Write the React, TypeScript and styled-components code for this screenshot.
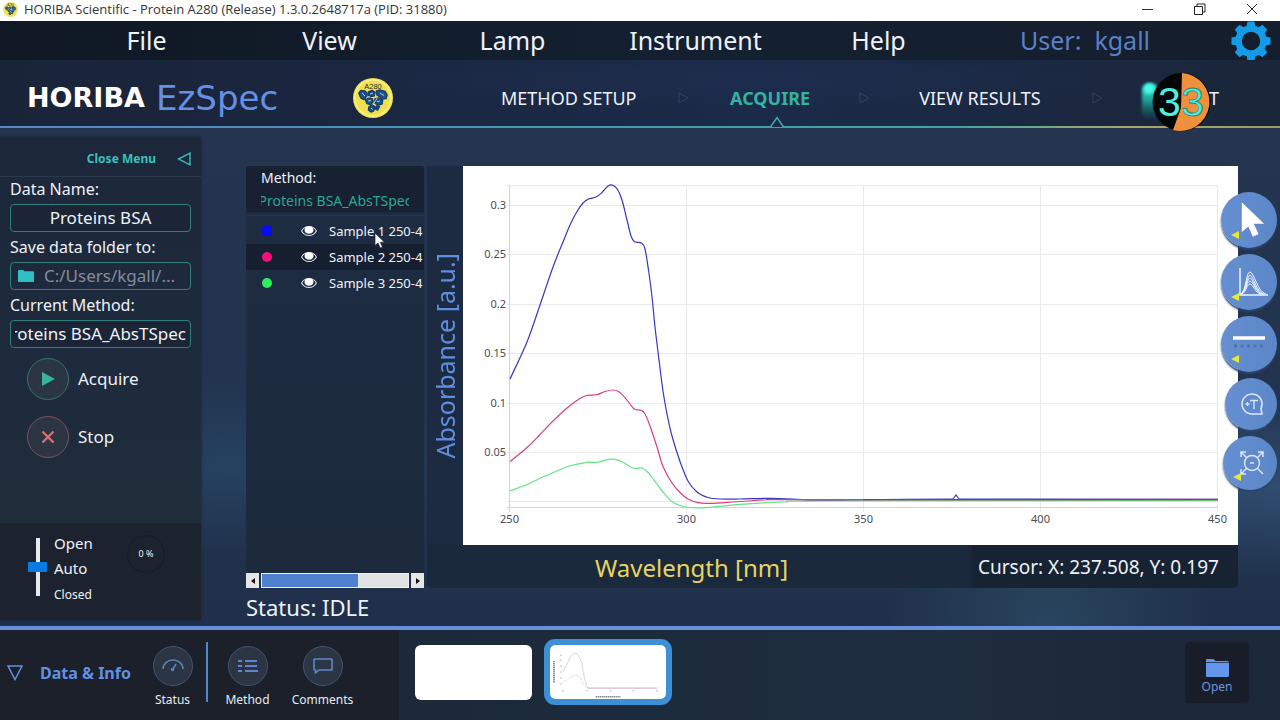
import React from "react";
import styled, { createGlobalStyle } from "styled-components";

const GlobalStyle = createGlobalStyle`
  *, *::before, *::after { box-sizing: border-box; }
  body {
    margin: 0;
    background: #1e2c42;
    color: #eef2f8;
    font-family: "Noto Sans", "Open Sans", sans-serif;
    font-size: 17px;
    line-height: 24px;
  }
  button, input {
    font: inherit;
    color: inherit;
    margin: 0;
    padding: 0;
    border: 0;
    background: none;
  }
  button { cursor: pointer; }
  ul { list-style: none; margin: 0; padding: 0; }
  svg { display: block; flex: none; }
`;

const Window = styled.div`
  min-height: 100vh;
  display: flex;
  flex-direction: column;
  overflow: hidden;
`;

/* ---------- title bar ---------- */

const TitleBar = styled.div`
  display: flex;
  align-items: center;
  height: 21px;
  padding: 0 20px 3px 3px;
  gap: 6px;
  background: #ffffff;
  color: #33353a;
`;

const Title = styled.h1`
  flex: 1;
  margin: 0;
  font-family: "Open Sans", "Noto Sans", sans-serif;
  font-size: 13px;
  font-weight: 400;
  line-height: 18px;
  white-space: nowrap;
`;

const WindowButtons = styled.div`
  display: flex;
  gap: 36px;
  button { width: 16px; height: 16px; display: grid; place-items: center; }
`;

/* ---------- menu bar ---------- */

const MenuBar = styled.div`
  display: flex;
  align-items: center;
  height: 39px;
  padding: 0 9px 0 55px;
  background: linear-gradient(90deg, #0f1823, #142031 50%, #151e2d);
`;

const Menus = styled.nav`
  flex: 1;
  display: grid;
  grid-template-columns: repeat(5, 1fr);
`;

const MenuButton = styled.button`
  font-size: 25px;
  line-height: 39px;
`;

const UserArea = styled.div`
  display: flex;
  align-items: center;
  justify-content: space-between;
  width: 301px;
  padding-left: 50px;
  font-size: 25px;
  line-height: 39px;
  color: #5b80c4;
  white-space: pre;
  button { height: 39px; }
`;

/* ---------- header with the work flow steps ---------- */

const Header = styled.header`
  position: relative;
  display: flex;
  height: 68px;
  padding: 0 61px 0 27px;
  background:
    radial-gradient(ellipse at 58% 30%, #20305199, transparent 40%),
    linear-gradient(90deg, #1a2439, #1b2a49 60%, #1a2639);
  &::after {
    content: "";
    position: absolute;
    inset: auto 0 0 0;
    height: 2px;
    background: linear-gradient(90deg, #5a86c8, #3f9cab 45%, #3fa79f 75%, #a8a968 88%, #9a9c60);
  }
`;

const Brand = styled.div`
  display: flex;
  align-items: center;
  width: 474px;
  height: 76px;
  font-family: "DejaVu Sans", sans-serif;
  line-height: 30px;
`;

const BrandMaker = styled.span`
  width: 129px;
  font-size: 27px;
  font-weight: 700;
  color: #ffffff;
`;

const BrandProduct = styled.span`
  width: 197px;
  font-size: 34px;
  color: #6590e6;
`;

const Steps = styled.nav`
  flex: 1;
  display: flex;
  height: 76px;
  align-items: center;
  font-size: 18px;
`;

const Step = styled.button<{ $active?: boolean; $covered?: boolean }>`
  position: relative;
  min-width: 64px;
  height: 24px;
  white-space: nowrap;
  text-align: ${(p) => (p.$covered ? "right" : "center")};
  font-weight: ${(p) => (p.$active ? 700 : 400)};
  color: ${(p) => (p.$active ? "#35b3a2" : "#eef2f8")};
`;

const ActiveMark = styled.svg`
  position: absolute;
  z-index: 1;
  left: 50%;
  bottom: -18px;
`;

const StepArrow = styled.span<{ $weight: number }>`
  flex: ${(p) => p.$weight};
  display: grid;
  place-items: center;
`;

const Recorder = styled.svg`
  position: absolute;
  right: 66px;
  top: 10px;
  z-index: 2;
`;

/* ---------- work area ---------- */

const Work = styled.main`
  position: relative;
  flex: 1;
  display: flex;
  align-items: stretch;
  gap: 45px;
  padding: 9px 42px 0 0;
  background:
    radial-gradient(circle at 82% 100%, #29455f, transparent 14%),
    radial-gradient(ellipse at 100% 72%, #2f4d70, transparent 18%),
    radial-gradient(ellipse at 18% 68%, #254260, transparent 18%),
    linear-gradient(180deg, #25344f, #22344f 60%, #20304b);
`;

const Sidebar = styled.aside`
  display: flex;
  flex-direction: column;
  width: 201px;
  margin-bottom: 6px;
  background: linear-gradient(180deg, #1d273a, #1e2b3d 45%, #1f2c39 80%);
  box-shadow: 0 0 3px #1a263a;
`;

const CloseMenu = styled.button`
  display: flex;
  align-items: center;
  justify-content: flex-end;
  gap: 21px;
  height: 40px;
  padding: 4px 10px 0 0;
  border-bottom: 1px solid #2c384c;
  font-size: 12px;
  font-weight: 700;
  color: #38c2bd;
`;

const Fields = styled.form`
  display: flex;
  flex-direction: column;
  padding: 0 10px;
`;

const Field = styled.div`
  display: flex;
  flex-direction: column;
  height: 58px;
  gap: 3px;
  white-space: nowrap;
`;

const FieldLabel = styled.label`
  font-size: 16px;
  line-height: 24px;
`;

const TextBox = styled.input<{ $showEnd?: boolean }>`
  width: 100%;
  height: 28px;
  padding: 0 4px 2px;
  border: 1px solid #2f7f7c;
  border-radius: 4px;
  text-align: ${(p) => (p.$showEnd ? "right" : "center")};
  direction: ${(p) => (p.$showEnd ? "rtl" : "ltr")};
  background: #1b2536;
`;

const FolderButton = styled.button`
  display: flex;
  align-items: center;
  gap: 10px;
  height: 28px;
  padding: 0 7px;
  border: 1px solid #2f7f7c;
  border-radius: 4px;
  color: #858c98;
`;

const Actions = styled.div`
  display: flex;
  flex-direction: column;
  gap: 16px;
  padding: 7px 27px;
  flex: 1;
`;

const ActionButton = styled.button`
  display: flex;
  align-items: center;
  gap: 9px;
  height: 42px;
`;

const RoundIcon = styled.span<{ $border: string; $size: number }>`
  display: grid;
  place-items: center;
  width: ${(p) => p.$size}px;
  height: ${(p) => p.$size}px;
  border: 1px solid ${(p) => p.$border};
  border-radius: 50%;
  background: #2c3544;
`;

const ShutterPanel = styled.div`
  display: flex;
  height: 97px;
  padding: 8px 0 0 28px;
  background: #1c222e;
`;

const ShutterSlider = styled.input`
  appearance: none;
  writing-mode: vertical-lr;
  direction: rtl;
  width: 19px;
  height: 58px;
  margin-top: 7px;
  &::-webkit-slider-runnable-track {
    width: 4px;
    height: 58px;
    background: #e8eaee;
  }
  &::-webkit-slider-thumb {
    appearance: none;
    width: 19px;
    height: 10px;
    margin-left: -8px;
    background: #0a7be0;
  }
`;

const ShutterLabels = styled.ul`
  width: 67px;
  margin-left: 7px;
  font-size: 15px;
  line-height: 25px;
  li:last-child { font-size: 12px; line-height: 27px; }
`;

const Progress = styled.span`
  display: grid;
  place-items: center;
  width: 38px;
  height: 38px;
  margin: 4px 0 0 6px;
  border: 1px solid #171b25;
  border-radius: 50%;
  font-size: 9px;
`;

/* ---------- samples and chart ---------- */

const Content = styled.section`
  flex: 1;
  min-width: 0;
  display: flex;
  flex-direction: column;
  padding-top: 29px;
`;

const Panels = styled.div`
  display: flex;
  gap: 3px;
  height: 422px;
`;

const Samples = styled.section`
  position: relative;
  display: flex;
  flex-direction: column;
  width: 178px;
  background: #1d2b41;
`;

const MethodHead = styled.div`
  height: 46px;
  padding: 0 15px;
  border-radius: 4px 4px 0 0;
  font-size: 14px;
  line-height: 23px;
  background: #172131;
`;

const MethodName = styled.div`
  display: flex;
  justify-content: center;
  overflow: hidden;
  white-space: nowrap;
  color: #2fa691;
`;

const SampleList = styled.ul`
  flex: 1;
  margin-top: 3px;
  padding-top: 2px;
  border-top: 1px solid #24344c;
  background: linear-gradient(180deg, #1e2c43, #1c2a3c);
`;

const SampleRow = styled.li<{ $dark?: boolean }>`
  display: flex;
  align-items: center;
  height: 26px;
  padding: 0 0 0 16px;
  white-space: nowrap;
  font-size: 13px;
  background: ${(p) => (p.$dark ? "#151f2f" : "transparent")};
`;

const Dot = styled.span<{ $color: string; $square?: boolean }>`
  flex: none;
  width: 10px;
  height: 10px;
  margin-right: 29px;
  border-radius: ${(p) => (p.$square ? "2px" : "50%")};
  background: ${(p) => p.$color};
`;

const EyeButton = styled.button`
  flex: none;
  width: 16px;
  margin-right: 12px;
`;

const Pointer = styled.svg`
  position: absolute;
  left: 128px;
  top: 66px;
`;

const ScrollBar = styled.div`
  display: flex;
  gap: 2px;
  height: 15px;
  button {
    width: 13px;
    display: grid;
    place-items: center;
    background: #e6e6e6;
  }
`;

const ScrollTrack = styled.div`
  flex: 1;
  background: #e1e2e4;
  border: 1px solid #eef0f4;
`;

const ScrollThumb = styled.div`
  width: 66%;
  height: 100%;
  background: #5080d0;
`;

const ChartPanel = styled.section`
  flex: 1;
  min-width: 0;
  display: grid;
  grid-template-columns: 36px 1fr;
  grid-template-rows: 1fr 43px;
  background: #1d2b42;
  border-radius: 0 0 5px 5px;
`;

const YTitle = styled.div`
  display: grid;
  place-items: center;
  font-size: 25px;
  line-height: 36px;
  color: #5e8ede;
  span { writing-mode: vertical-rl; transform: rotate(180deg); }
`;

const Plot = styled.div`
  min-height: 0;
  background: #ffffff;
  svg { width: 100%; height: 100%; }
  text { font-size: 11px; fill: #4c4c54; }
`;

const ChartFooter = styled.div`
  grid-column: 1 / -1;
  display: flex;
  line-height: 45px;
  background: #1b293c;
  border-radius: 0 0 5px 5px;
`;

const XTitle = styled.div`
  flex: 1;
  padding-right: 16px;
  text-align: center;
  font-size: 24px;
  color: #e6d560;
`;

const CursorReadout = styled.output`
  width: 266px;
  height: 43px;
  padding-left: 6px;
  border-radius: 0 0 5px 0;
  font-size: 19px;
  white-space: nowrap;
  background: #172333;
`;

const Status = styled.div`
  font-size: 22px;
  line-height: 38px;
`;

const Tools = styled.div`
  position: absolute;
  right: 3px;
  top: 64px;
  display: flex;
  flex-direction: column;
  align-items: flex-end;
  gap: 6px;
`;

const ToolButton = styled.button<{ $size: number; $inset?: number }>`
  position: relative;
  display: grid;
  place-items: center;
  width: ${(p) => p.$size}px;
  height: ${(p) => p.$size}px;
  padding-left: ${(p) => p.$inset ?? 0}px;
  border-radius: 50%;
  background: linear-gradient(90deg, #658fd0, #5b86c8);
  box-shadow: 0 2px 2px #2b4470;
`;

const ToolFlag = styled.svg`
  position: absolute;
  left: 10px;
  bottom: 9px;
`;

/* ---------- bottom bar ---------- */

const BottomBar = styled.footer`
  display: flex;
  height: 94px;
  border-top: 4px solid #6690dc;
  background: linear-gradient(90deg, #1b2939 30%, #1e2d3f 70%, #1c2738);
`;

const InfoPanel = styled.div`
  display: flex;
  align-items: flex-start;
  width: 399px;
  padding: 12px 0 0 7px;
  background: #1b202b;
`;

const InfoToggle = styled.button`
  display: flex;
  align-items: center;
  gap: 17px;
  width: 128px;
  height: 62px;
  font-size: 16px;
  font-weight: 700;
  white-space: nowrap;
  color: #6490e0;
`;

const InfoButton = styled.button`
  display: flex;
  flex-direction: column;
  align-items: center;
  gap: 2px;
  width: 75px;
  padding-top: 4px;
  font-size: 12px;
  color: #e6ebf3;
`;

const InfoDivider = styled.span`
  width: 2px;
  height: 60px;
  margin: 0 2px 0 -4px;
  background: #4a8bcc;
`;

const Thumbs = styled.div`
  flex: 1;
  display: flex;
  align-items: flex-start;
  gap: 12px;
  padding: 9px 0 0 16px;
`;

const Thumb = styled.button<{ $selected?: boolean }>`
  width: ${(p) => (p.$selected ? 128 : 117)}px;
  height: ${(p) => (p.$selected ? 66 : 55)}px;
  margin-top: ${(p) => (p.$selected ? 0 : 6)}px;
  border: ${(p) => (p.$selected ? "6px solid #3d8fd6" : "0")};
  border-radius: ${(p) => (p.$selected ? 11 : 6)}px;
  background-color: ${(p) => (p.$selected ? "#3d8fd6" : "#ffffff")};
  overflow: hidden;
  svg { width: 100%; height: 100%; }
`;

const ThumbInner = styled.span`
  display: block;
  height: 100%;
  border-radius: 5px;
  background: #ffffff;
`;

const OpenButton = styled.button`
  display: flex;
  flex-direction: column;
  align-items: center;
  width: 64px;
  height: 61px;
  margin: 12px 31px 0 0;
  padding-top: 17px;
  border-radius: 4px;
  font-size: 12px;
  line-height: 20px;
  color: #6f95dc;
  background: #181d29;
`;

/* ---------- chart data ---------- */

type Point = [number, number];

const blue: Point[] = [
  [47, 213], [64, 176], [77, 139], [90, 101], [100, 76], [107, 59], [114, 45.5], [120, 37], [125.5, 33],
  [133, 31], [139, 26.5], [145, 20], [150, 19.3], [154.5, 23.5], [159, 34], [164, 54], [168, 70],
  [171.5, 75.8], [178.5, 77], [182, 83], [185.5, 104], [189, 131], [192, 161], [195.5, 190], [200, 225],
  [204, 248], [209, 270], [217, 295.5], [225, 315], [234, 326], [245, 331.5], [257, 333], [277, 333],
  [310, 332.3], [345, 333.8], [420, 333.5], [488, 333],
];
const red: Point[] = [
  [47, 295.5], [64, 281.5], [77, 268.5], [90, 255], [104, 242], [114, 234.5], [122, 230], [134, 228.7],
  [142, 225.5], [150, 224], [155.5, 225.5], [162, 231.7], [169, 240.7], [172, 243.5], [178, 244.3],
  [182, 248], [187, 260], [194, 281], [200, 300.5], [209, 317], [217, 326.5], [225, 333], [235, 336.7],
  [247, 337.3], [277, 335.5], [310, 333.5], [345, 333.7], [755, 333.4],
];
const green: Point[] = [
  [47, 325], [64, 318.5], [80, 311], [94, 305], [107, 299.8], [124, 296.3], [135, 296.3], [145, 293.4],
  [152, 293.4], [160, 296.3], [169, 301.7], [174, 302.4], [179, 302], [185, 306.5], [194, 318],
  [202, 328.5], [210, 336.3], [220, 340.5], [234, 342], [250, 341], [277, 338.3], [320, 336], [370, 334.8],
  [755, 334.6],
];

/* Catmull-Rom spline through the measured points */
const smooth = (pts: Point[]) =>
  pts.slice(1).reduce((d, p, i) => {
    const p0 = pts[Math.max(i - 1, 0)];
    const p1 = pts[i];
    const p3 = pts[Math.min(i + 2, pts.length - 1)];
    const c1 = [p1[0] + (p[0] - p0[0]) / 6, p1[1] + (p[1] - p0[1]) / 6];
    const c2 = [p[0] - (p3[0] - p1[0]) / 6, p[1] - (p3[1] - p1[1]) / 6];
    return `${d}C${c1.map((n) => n.toFixed(1)).join(" ")} ${c2.map((n) => n.toFixed(1)).join(" ")} ${p.join(" ")}`;
  }, `M${pts[0].join(" ")}`);

const bluePath = smooth(blue) + "L490 333L493 329L496 333L755 333.3";
const redPath = smooth(red);
const greenPath = smooth(green);

const yTicks: [string, number][] = [["0.3", 39], ["0.25", 88], ["0.2", 138], ["0.15", 187], ["0.1", 237], ["0.05", 286]];
const xTicks: [string, number][] = [["250", 47], ["300", 224], ["350", 401], ["400", 578], ["450", 755]];

const Spectrum = () => (
  <svg viewBox="0 0 775 379" role="img" aria-label="Absorbance spectrum">
    <g fill="none" stroke="#e9e9ec">
      {[19.5, 39.5, 88.5, 138.5, 187.5, 237.5, 286.5, 335.5].map((y) => <path key={y} d={`M44 ${y}H755`} />)}
      {[224, 401, 578, 755].map((x) => <path key={x} d={`M${x - 0.5} 19V346`} />)}
      <path d="M46.5 19V346M44 341.5H755" stroke="#d2d3d8" />
    </g>
    {yTicks.map(([t, y]) => <text key={t} x="43" y={y + 4} textAnchor="end">{t}</text>)}
    {xTicks.map(([t, x]) => <text key={t} x={x - 0.5} y="357" textAnchor="middle">{t}</text>)}
    <g fill="none">
      <path d={greenPath} stroke="#5fe583" strokeWidth="1.2" />
      <path d={bluePath} stroke="#3a36c4" strokeWidth="1.2" />
      <path d={redPath} stroke="#d8407c" strokeWidth="1.2" />
      <path d="M400 333.7H755" stroke="#8a2f78" />
    </g>
  </svg>
);

/* ---------- icons ---------- */

const ProteinBadge = ({ size }: { size: number }) => (
  <svg width={size} height={size} viewBox="0 0 40 40">
    <circle cx="20" cy="20" r="20" fill="#f0e04e" />
    <circle cx="20" cy="20" r="18" fill="none" stroke="#f9f08e" strokeWidth="1.5" />
    <text x="20" y="10.5" fontSize="7.5" textAnchor="middle" fill="#2b2e2a" fontFamily="Liberation Sans, sans-serif">A280</text>
    <g fill="#1f548f" stroke="#173f70" strokeWidth="1.6" strokeLinejoin="round">
      <path d="M6 15L8 12.500L12 13L14 15.500L13.500 19L11 21.500L8 20L7 18z" />
      <path d="M15.500 14L19 12.500L22 14.500L21 18L17.500 18.500L15 17z" />
      <path d="M23.500 13L27 12L32 13.500L34 17L33 20.500L29.500 21L26.500 18.500L24 17z" />
      <path d="M12.500 22L16 20L19.500 21L20 24L17.500 26.500L14 25.500z" />
      <path d="M22 21L25.500 20L29.500 22.500L29 26L25 27L22 25z" />
      <path d="M16 29L19 27L22 29L20.500 33L18 34L15.500 32z" />
      <path d="M23.500 28L26.500 28.500L24.500 32L22.500 31z" />
    </g>
    <path d="M9 15L12 18M17 16L20 15M27 15L31 17.500M15 23L18 22.500M24 23.500L27 23M18 30L19.500 31.500M20.500 26L24.500 19.500M13 20L17 18.500" stroke="#a9c6b8" strokeWidth="1" fill="none" />
  </svg>
);

const GearIcon = () => (
  <svg width="40" height="40" viewBox="0 0 40 40">
    <g fill="#149be8">
      {[0, 45, 90, 135, 180, 225, 270, 315].map((a) => (
        <path key={a} d="M15 8L16.6 .500h6.8L25 8z" transform={`rotate(${a} 20 20)`} />
      ))}
    </g>
    <circle cx="20" cy="20" r="12.500" fill="none" stroke="#149be8" strokeWidth="6.500" />
  </svg>
);

const Folder = ({ width, height, color, light }: { width: number; height: number; color: string; light?: boolean }) => (
  <svg width={width} height={height} viewBox="0 0 22 18" preserveAspectRatio="none">
    <path d="M0 1Q0 0 1 0H7L9 2H20.500Q22 2 22 3.500V16.500Q22 18 20.500 18H1Q0 18 0 16.500z" fill={color} />
    {light && <path d="M0 3.500H22" stroke="#2a3f6b" strokeWidth="1" />}
  </svg>
);

const Eye = () => (
  <svg width="16" height="12" viewBox="0 0 16 12">
    <path d="M.6 6Q3 1.500 8 1.500T15.400 6Q13 10.500 8 10.500T.6 6z" fill="none" stroke="#d5dce6" strokeWidth="1.100" />
    <ellipse cx="8" cy="5" rx="4.500" ry="3.800" fill="#fff" />
  </svg>
);

const Flag = () => (
  <ToolFlag width="8" height="8" viewBox="0 0 8 8"><path d="M0 4L8 0V8z" fill="#e3ea2e" /></ToolFlag>
);

const RecorderBadge = () => (
  <Recorder width="74" height="62" viewBox="0 0 74 62" aria-hidden="true">
    <defs>
      <filter id="soft" x="-50%" y="-50%" width="200%" height="200%"><feGaussianBlur stdDeviation="1.500" /></filter>
      <linearGradient id="teal" x1="0" y1="0" x2="0" y2="1">
        <stop offset="0" stopColor="#37efdc" /><stop offset=".5" stopColor="#1d9c93" /><stop offset="1" stopColor="#1a5560" stopOpacity=".2" />
      </linearGradient>
    </defs>
    <rect x="2" y="13" width="16" height="36" rx="7" fill="url(#teal)" filter="url(#soft)" />
    <circle cx="9" cy="19" r="5" fill="#46fbe6" filter="url(#soft)" />
    <circle cx="41.500" cy="32" r="29" fill="#050607" />
    <path d="M42 3A29 29 0 1 1 33 60L41 38z" fill="#f0903c" />
    <g fontFamily="Liberation Sans, sans-serif" fontSize="41" fill="#4df0dc">
      <text x="18" y="46">3</text>
      <text x="41" y="46" stroke="#2c7f78" strokeWidth=".8">3</text>
    </g>
  </Recorder>
);

const Triangle = () => (
  <svg width="11" height="12" viewBox="0 0 11 12"><path d="M1 1L10 6L1 11z" fill="none" stroke="#33445f" /></svg>
);

/* ---------- page ---------- */

const samples = [
  { name: "Sample 1 250-4", color: "#0b0bf0", square: true },
  { name: "Sample 2 250-4", color: "#f5107c", dark: true },
  { name: "Sample 3 250-4", color: "#2fee5c" },
];

export default function App() {
  return (
    <>
      <GlobalStyle />
      <Window>
        <TitleBar>
          <ProteinBadge size={15} />
          <Title>HORIBA Scientific - Protein A280 (Release) 1.3.0.2648717a (PID: 31880)</Title>
          <WindowButtons>
            <button aria-label="Minimize"><svg width="12" height="12"><path d="M0 6.500H11" stroke="#333" /></svg></button>
            <button aria-label="Restore">
              <svg width="12" height="12" fill="none" stroke="#222"><path d="M.5 3.500H8.500V11.500H.5zM3 3.500V1H11V9H8.500" /></svg>
            </button>
            <button aria-label="Close"><svg width="12" height="12"><path d="M1 1L11 11M11 1L1 11" stroke="#222" /></svg></button>
          </WindowButtons>
        </TitleBar>

        <MenuBar>
          <Menus>
            {["File", "View", "Lamp", "Instrument", "Help"].map((m) => <MenuButton key={m}>{m}</MenuButton>)}
          </Menus>
          <UserArea>
            <span>{"User:  kgall"}</span>
            <button aria-label="Settings"><GearIcon /></button>
          </UserArea>
        </MenuBar>

        <Header>
          <Brand>
            <BrandMaker>HORIBA</BrandMaker>
            <BrandProduct>EzSpec</BrandProduct>
            <ProteinBadge size={40} />
          </Brand>
          <Steps>
            <Step>METHOD SETUP</Step>
            <StepArrow $weight={18}><Triangle /></StepArrow>
            <Step $active>
              ACQUIRE
              <ActiveMark width="14" height="12" viewBox="0 0 14 12">
                <path d="M1.500 11H12.500L7 2z" fill="#1d2b48" />
                <path d="M0 11.500L7 1.500L14 11.500" fill="none" stroke="#45a8a8" strokeWidth="1.500" />
              </ActiveMark>
            </Step>
            <StepArrow $weight={21}><Triangle /></StepArrow>
            <Step>VIEW RESULTS</Step>
            <StepArrow $weight={22}><Triangle /></StepArrow>
            <Step $covered>T</Step>
          </Steps>
          <RecorderBadge />
        </Header>

        <Work>
          <Sidebar>
            <CloseMenu>
              Close Menu
              <svg width="14" height="14" viewBox="0 0 14 14"><path d="M1.500 7L13 1.200V12.800z" fill="none" stroke="#38b8ae" strokeWidth="1.500" /></svg>
            </CloseMenu>
            <Fields>
              <Field>
                <FieldLabel htmlFor="data-name">Data Name:</FieldLabel>
                <TextBox id="data-name" defaultValue="Proteins BSA" />
              </Field>
              <Field>
                <FieldLabel htmlFor="folder">Save data folder to:</FieldLabel>
                <FolderButton id="folder" type="button">
                  <Folder width={16} height={12} color="#2fbfc4" />
                  C:/Users/kgall/...
                </FolderButton>
              </Field>
              <Field>
                <FieldLabel htmlFor="method">Current Method:</FieldLabel>
                <TextBox id="method" $showEnd defaultValue="Proteins BSA_AbsTSpec" />
              </Field>
            </Fields>
            <Actions>
              <ActionButton>
                <RoundIcon $size={42} $border="#2f766f">
                  <svg width="14" height="14"><path d="M1 0L14 7L1 14z" fill="#35b5a0" /></svg>
                </RoundIcon>
                Acquire
              </ActionButton>
              <ActionButton>
                <RoundIcon $size={42} $border="#80505c">
                  <svg width="14" height="14"><path d="M1.500 1.500L12.500 12.500M12.500 1.500L1.500 12.500" stroke="#e07272" strokeWidth="2.200" /></svg>
                </RoundIcon>
                Stop
              </ActionButton>
            </Actions>
            <ShutterPanel>
              <ShutterSlider type="range" min="0" max="2" defaultValue="1" aria-label="Shutter" />
              <ShutterLabels><li>Open</li><li>Auto</li><li>Closed</li></ShutterLabels>
              <Progress>0 %</Progress>
            </ShutterPanel>
          </Sidebar>

          <Content>
            <Panels>
              <Samples>
                <MethodHead>
                  Method:
                  <MethodName><span>Proteins BSA_AbsTSpec</span></MethodName>
                </MethodHead>
                <SampleList>
                  {samples.map((s) => (
                    <SampleRow key={s.name} $dark={s.dark}>
                      <Dot $color={s.color} $square={s.square} />
                      <EyeButton aria-label={`Toggle ${s.name}`}><Eye /></EyeButton>
                      {s.name}
                    </SampleRow>
                  ))}
                </SampleList>
                <ScrollBar>
                  <button aria-label="Scroll left"><svg width="4" height="6"><path d="M4 0V6L0 3z" fill="#111" /></svg></button>
                  <ScrollTrack><ScrollThumb /></ScrollTrack>
                  <button aria-label="Scroll right"><svg width="4" height="6"><path d="M0 0V6L4 3z" fill="#111" /></svg></button>
                </ScrollBar>
                <Pointer width="12" height="17" viewBox="0 0 12 17">
                  <path d="M1 1V13.500L4 11L6.200 16L8.500 15L6.300 10.200H10.500z" fill="#fff" stroke="#1a2233" strokeWidth=".7" />
                </Pointer>
              </Samples>

              <ChartPanel>
                <YTitle><span>Absorbance [a.u.]</span></YTitle>
                <Plot><Spectrum /></Plot>
                <ChartFooter>
                  <XTitle>Wavelength [nm]</XTitle>
                  <CursorReadout>Cursor: X: 237.508, Y: 0.197</CursorReadout>
                </ChartFooter>
              </ChartPanel>
            </Panels>
            <Status>Status: IDLE</Status>
          </Content>

          <Tools>
            <ToolButton $size={56} $inset={6} aria-label="Pointer">
              <svg width="26" height="38" viewBox="0 0 28 38"><path d="M3 0V32L10 26L15 37L21 34L16 23H27z" fill="#fff" /></svg>
              <Flag />
            </ToolButton>
            <ToolButton $size={56} $inset={8} aria-label="Peaks">
              <svg width="30" height="30" viewBox="0 0 30 30" fill="none" stroke="#eef4ff">
                <path d="M2 1V28H30" strokeWidth="1.500" />
                <path d="M3 27C8 24 8 5 12 5S20 26 28 27M3 27C8 24 9 8 12 8S19 26 26 27M3 27C8 25 9 11 12 11S18 26 25 27M3 27C8 25 9 14 12 14S18 26 24 27M4 27C8 25 9 17 12 17S17 26 23 27" />
              </svg>
              <Flag />
            </ToolButton>
            <ToolButton $size={56} aria-label="Line style">
              <svg width="32" height="16" viewBox="0 0 32 16">
                <path d="M0 2H32" stroke="#fff" strokeWidth="3.500" />
                <path d="M1 10H32" stroke="#4a73b4" strokeWidth="3" strokeDasharray="3 3.500" />
              </svg>
              <Flag />
            </ToolButton>
            <ToolButton $size={52} $inset={2} aria-label="Add text">
              <svg width="24" height="24" viewBox="0 0 24 24">
                <path d="M22 22H12A10 10 0 1 1 21 16.500z" fill="none" stroke="#dfe9fb" strokeWidth="1.500" />
                <path d="M5.500 12H9.500M7.500 10V14M10 8.500H18M14 8.500V17" stroke="#dfe9fb" strokeWidth="1.300" />
              </svg>
            </ToolButton>
            <ToolButton $size={54} $inset={4} aria-label="Zoom to fit">
              <svg width="24" height="24" viewBox="0 0 24 24" fill="none" stroke="#dfe9fb" strokeWidth="1.400">
                <circle cx="12" cy="12" r="7.500" />
                <path d="M10 12H14M1 6V1H6M1 1L6.500 6.500M18 1H23V6M23 1L17.500 6.500M1 18V23H6M1 23L6.500 17.500M17.500 17.500L23 23" />
              </svg>
              <Flag />
            </ToolButton>
          </Tools>
        </Work>

        <BottomBar>
          <InfoPanel>
            <InfoToggle>
              <svg width="16" height="16" viewBox="0 0 16 16"><path d="M1 1H15L8 14.500z" fill="none" stroke="#5f92dc" strokeWidth="1.500" /></svg>
              Data &amp; Info
            </InfoToggle>
            <InfoButton>
              <RoundIcon $size={40} $border="#43536f">
                <svg width="22" height="14" viewBox="0 0 22 14" fill="none" stroke="#5f80b8" strokeWidth="1.500">
                  <path d="M1 10A10 9 0 0 1 21 10" /><path d="M11 10L14 5" /><circle cx="10.500" cy="10.500" r="1" />
                </svg>
              </RoundIcon>
              Status
            </InfoButton>
            <InfoDivider />
            <InfoButton>
              <RoundIcon $size={40} $border="#43536f">
                <svg width="20" height="14" viewBox="0 0 20 14" stroke="#5f86cc" strokeWidth="1.800">
                  <path d="M0 2H4M0 7H4M0 12H4M7 2H19M7 7H19M7 12H20" />
                </svg>
              </RoundIcon>
              Method
            </InfoButton>
            <InfoButton>
              <RoundIcon $size={40} $border="#43536f">
                <svg width="20" height="16" viewBox="0 0 20 16" fill="none" stroke="#5f86cc" strokeWidth="1.600">
                  <path d="M1 1.500Q1 1 1.500 1H18.500Q19 1 19 1.500V11.500Q19 12 18.500 12H6L2.500 15V12Q1 12 1 11.500z" />
                </svg>
              </RoundIcon>
              Comments
            </InfoButton>
          </InfoPanel>
          <Thumbs>
            <Thumb aria-label="Empty result" />
            <Thumb $selected aria-label="Protein spectrum">
              <ThumbInner>
                <svg viewBox="0 0 117 54">
                  <path d="M4 16V38" stroke="#777" strokeWidth="1.500" strokeDasharray="1.500 .5" />
                  <path d="M46 52H71" stroke="#888" strokeWidth="1.500" strokeDasharray="1.500 .5" />
                  <path d="M10 10H12M10 15H12M10 21H12M10 27H12M10 33H12M10 39H12M12 46H14M36 46H38M60 46H62M83 46H85M107 46H109" stroke="#bbb" />
                  <g fill="none" stroke="#cfc8d6" strokeWidth=".8">
                    <path d="M13 27L21 11Q26 5 29 11L32 17Q35 38 38 43H108" />
                    <path d="M13 38Q26 26 31 33Q34 42 38 43" strokeDasharray="2 1" />
                  </g>
                  <path d="M38 43.500H108" stroke="#d9c3d6" />
                </svg>
              </ThumbInner>
            </Thumb>
          </Thumbs>
          <OpenButton>
            <Folder width={23} height={18} color="#6496ee" light />
            Open
          </OpenButton>
        </BottomBar>
      </Window>
    </>
  );
}
